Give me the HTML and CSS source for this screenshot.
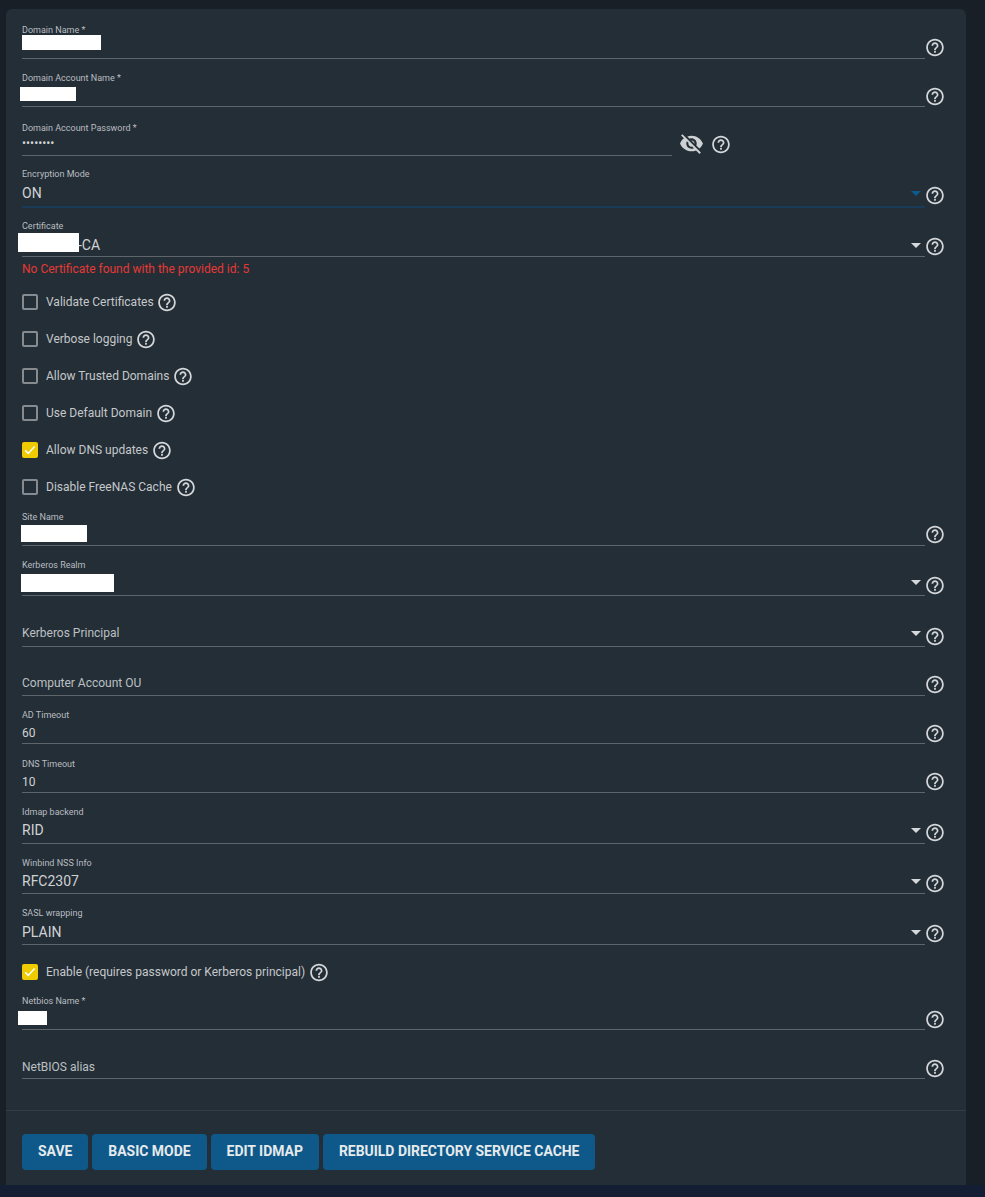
FILE: index.html
```html
<!DOCTYPE html>
<html lang="en">
<head>
<meta charset="utf-8">
<title>Active Directory</title>
<link rel="stylesheet" href="styles.css">
</head>
<body>
<svg class="defs" aria-hidden="true">
  <symbol id="help" viewBox="0.6 0 24 24"><path d="M11 18h2v-2h-2v2zm1-16C6.48 2 2 6.48 2 12s4.48 10 10 10 10-4.48 10-10S17.52 2 12 2zm0 18c-4.41 0-8-3.59-8-8s3.59-8 8-8 8 3.59 8 8-3.59 8-8 8zm0-14c-2.21 0-4 1.79-4 4h2c0-1.1.9-2 2-2s2 .9 2 2c0 2-3 1.75-3 5h2c0-2.25 3-2.5 3-5 0-2.21-1.79-4-4-4z"/></symbol>
</svg>
<main class="card">
  <form class="form">
    <div class="row h48"><div class="control"><label class="label lm0">Domain Name *</label><div class="value"><span class="redact r-domain"></span>&nbsp;</div></div><svg class="help"><use href="#help"/></svg></div>
    <div class="row h48"><div class="control"><label class="label lm0">Domain Account Name *</label><div class="value"><span class="redact r-account"></span>&nbsp;</div></div><svg class="help help-low"><use href="#help"/></svg></div>
    <div class="row h49">
      <div class="control control-password pb3"><label class="label lm0">Domain Account Password *</label><div class="value value-dots">••••••••</div></div>
      <svg class="eye" viewBox="0 0 24 24"><path d="M12 7c2.76 0 5 2.24 5 5 0 .65-.13 1.26-.36 1.83l2.92 2.92c1.51-1.26 2.7-2.89 3.43-4.75-1.73-4.39-6-7.5-11-7.5-1.4 0-2.74.25-3.98.7l2.16 2.16C10.74 7.13 11.35 7 12 7zM2 4.27l2.28 2.28.46.46C3.08 8.3 1.78 10.02 1 12c1.73 4.39 6 7.5 11 7.5 1.55 0 3.03-.3 4.38-.84l.42.42L19.73 22 21 20.73 3.27 3 2 4.27zM7.53 9.8l1.55 1.55c-.05.21-.08.43-.08.65 0 1.66 1.34 3 3 3 .22 0 .44-.03.65-.08l1.55 1.55c-.67.33-1.41.53-2.2.53-2.76 0-5-2.24-5-5 0-.79.2-1.53.53-2.2zm4.31-.78l3.15 3.15.02-.16c0-1.66-1.34-3-3-3l-.17.01z"/></svg>
      <svg class="help help-password"><use href="#help"/></svg>
    </div>
    <div class="row h52"><div class="control control-focus"><label class="label">Encryption Mode</label><div class="value value-select">ON<i class="arrow"></i></div></div><svg class="help help-focus"><use href="#help"/></svg></div>
    <div class="row h49"><div class="control pb2"><label class="label">Certificate</label><div class="value value-select"><span class="cert"><span class="redact r-cert"></span>-CA</span><i class="arrow"></i></div></div><svg class="help help-low"><use href="#help"/></svg></div>
    <div class="error">No Certificate found with the provided id: 5</div>

    <div class="check"><span class="box"></span><span class="check-text">Validate Certificates</span><svg class="help help-inline"><use href="#help"/></svg></div>
    <div class="check"><span class="box"></span><span class="check-text">Verbose logging</span><svg class="help help-inline"><use href="#help"/></svg></div>
    <div class="check"><span class="box"></span><span class="check-text">Allow Trusted Domains</span><svg class="help help-inline"><use href="#help"/></svg></div>
    <div class="check"><span class="box"></span><span class="check-text">Use Default Domain</span><svg class="help help-inline"><use href="#help"/></svg></div>
    <div class="check"><span class="box box-on"><svg class="tick" viewBox="0 0 16 16"><path d="M3.2 8.4l3 3 6.4-7"/></svg></span><span class="check-text">Allow DNS updates</span><svg class="help help-inline"><use href="#help"/></svg></div>
    <div class="check"><span class="box"></span><span class="check-text">Disable FreeNAS Cache</span><svg class="help help-inline"><use href="#help"/></svg></div>

    <div class="row h40"><div class="control"><label class="label lm0">Site Name</label><div class="value"><span class="redact r-site"></span>&nbsp;</div></div><svg class="help"><use href="#help"/></svg></div>
    <div class="row h50"><div class="control"><label class="label lm2">Kerberos Realm</label><div class="value value-select"><span class="redact r-realm"></span>&nbsp;<i class="arrow"></i></div></div><svg class="help help-low"><use href="#help"/></svg></div>
    <div class="row h51"><div class="control"><div class="value value-select placeholder">Kerberos Principal<i class="arrow"></i></div></div><svg class="help help-low"><use href="#help"/></svg></div>
    <div class="row h49"><div class="control pb3"><div class="value placeholder">Computer Account OU</div></div><svg class="help"><use href="#help"/></svg></div>
    <div class="row h48"><div class="control pb1"><label class="label lm3">AD Timeout</label><div class="value value-input">60</div></div><svg class="help help-low"><use href="#help"/></svg></div>
    <div class="row h49"><div class="control pb1"><label class="label lm3">DNS Timeout</label><div class="value value-input">10</div></div><svg class="help"><use href="#help"/></svg></div>
    <div class="row h51"><div class="control"><label class="label lm3">Idmap backend</label><div class="value value-select">RID<i class="arrow"></i></div></div><svg class="help"><use href="#help"/></svg></div>
    <div class="row h50"><div class="control pb3"><label class="label lm3">Winbind NSS Info</label><div class="value value-select">RFC2307<i class="arrow"></i></div></div><svg class="help help-low"><use href="#help"/></svg></div>
    <div class="row h51"><div class="control pb3"><label class="label">SASL wrapping</label><div class="value value-select">PLAIN<i class="arrow"></i></div></div><svg class="help"><use href="#help"/></svg></div>

    <div class="check check-enable"><span class="box box-on"><svg class="tick" viewBox="0 0 16 16"><path d="M3.2 8.4l3 3 6.4-7"/></svg></span><span class="check-text">Enable (requires password or Kerberos principal)</span><svg class="help help-inline"><use href="#help"/></svg></div>

    <div class="row h40"><div class="control"><label class="label lm0">Netbios Name *</label><div class="value"><span class="redact r-netbios"></span>&nbsp;</div></div><svg class="help help-low"><use href="#help"/></svg></div>
    <div class="row h49"><div class="control pb2"><div class="value placeholder">NetBIOS alias</div></div><svg class="help help-low"><use href="#help"/></svg></div>
  </form>
  <footer class="actions">
    <button class="btn" type="button">SAVE</button>
    <button class="btn" type="button">BASIC MODE</button>
    <button class="btn" type="button">EDIT IDMAP</button>
    <button class="btn" type="button">REBUILD DIRECTORY SERVICE CACHE</button>
  </footer>
</main>
<div class="strip"></div>
</body>
</html>
```
FILE: styles.css
```css
* { box-sizing: border-box; }
html, body { margin: 0; padding: 0; }
body {
  height: 1197px;
  overflow: hidden;
  background: #181f27;
  font-family: Roboto, "Liberation Sans", sans-serif;
  color: #cfd2d4;
  padding-top: 9px;
}
.defs { display: none; }
.card {
  margin-left: 6px;
  width: 960px;
  height: 1176px;
  background: #242e37;
  border-radius: 6px 6px 0 0;
  display: flex;
  flex-direction: column;
}
.form { padding: 2px 20px 0 16px; }

.row { display: flex; align-items: flex-end; }
.h40 { height: 40px; }
.h48 { height: 48px; }
.h49 { height: 49px; }
.h50 { height: 50px; }
.h51 { height: 51px; }
.h52 { height: 52px; }

.control {
  flex: 1;
  min-width: 0;
  border-bottom: 1px solid #5e656b;
  padding-bottom: 4px;
}
.pb1 { padding-bottom: 1px; }
.pb2 { padding-bottom: 2px; }
.pb3 { padding-bottom: 3px; }
.control-focus { border-bottom: 2px solid #1a3b58; }
.control-password { flex: none; width: 650px; }

.label {
  display: block;
  font-size: 9px;
  line-height: 11px;
  color: #b9bdc0;
  margin-bottom: 4px;
  white-space: nowrap;
}
.lm0 { margin-bottom: 0; }
.lm2 { margin-bottom: 2px; }
.lm3 { margin-bottom: 3px; }
.value {
  position: relative;
  font-size: 14px;
  line-height: 18px;
  color: #cfd2d4;
}
.value-input { font-size: 12px; }
.value-select { display: flex; align-items: center; justify-content: space-between; padding-right: 4px; }
.value-dots { font-size: 12px; }
.placeholder { color: #bcc0c3; font-size: 12px; }
.arrow {
  width: 0;
  height: 0;
  border-left: 5px solid transparent;
  border-right: 5px solid transparent;
  border-top: 5px solid #d5d8da;
}
.control-focus .arrow { border-top-color: #0d5a8e; }
.cert { position: relative; padding-left: 56px; }

.redact { position: absolute; background: #fff; }
.r-domain { left: 0; top: -1px; width: 79px; height: 15px; }
.r-account { left: -2px; top: 3px; width: 56px; height: 14px; }
.r-cert { left: -4px; top: -3px; width: 61px; height: 19px; }
.r-site { left: -1px; top: 2px; width: 66px; height: 17px; }
.r-realm { left: -1px; top: 1px; width: 93px; height: 18px; }
.r-netbios { left: -4px; top: 4px; width: 29px; height: 14px; }

.help { width: 21px; height: 21px; flex: none; fill: #d4d7d9; margin-bottom: 1px; }
.help-low { margin-bottom: 0; }
.help-focus { margin-bottom: 2px; }
.help-password { margin: 0 0 1px 7px; }
.eye { width: 25px; height: 25px; flex: none; fill: #cfd2d4; margin: 0 0 0 7px; }
.help-inline { margin: 0 0 0 3.8px; }

.error {
  height: 27px;
  padding-top: 5px;
  font-size: 12px;
  line-height: 14px;
  color: #e53935;
}
.check {
  display: flex;
  align-items: center;
  height: 36px;
  margin-bottom: 1px;
  font-size: 12px;
  color: #c4c8ca;
}
.check-enable { margin-top: 9px; margin-bottom: 0; }
.box {
  width: 16px;
  height: 16px;
  flex: none;
  border: 2px solid #868b8f;
  border-radius: 2px;
  margin-right: 8px;
}
.box-on { border: 0; background: #f0cb00; }
.tick { display: block; width: 16px; height: 16px; fill: none; stroke: #fff; stroke-width: 1.5; }

.actions {
  margin-top: 31px;
  border-top: 1px solid #333d45;
  padding: 23px 16px 0;
  display: flex;
  gap: 4px;
}
.btn {
  height: 36px;
  padding: 0 16px 1px;
  border: 0;
  border-radius: 4px;
  background: #0e598a;
  color: #e6eaec;
  font: 700 13.95px/35px Roboto, "Liberation Sans", sans-serif;
}
.strip { height: 12px; background: #131e35; }
```
